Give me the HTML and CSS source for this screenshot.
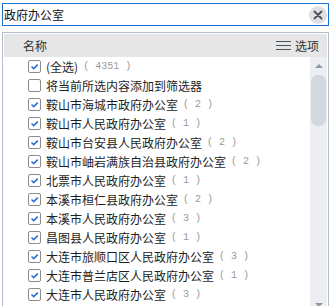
FILE: index.html
```html
<!DOCTYPE html>
<html lang="zh-CN">
<head>
    <meta charset="UTF-8">
    <title>筛选器</title>
    <link rel="stylesheet" href="styles.css">
</head>
<body>
    <div class="search">
        <span class="search-text">政府办公室</span>
        <span class="clear">
            <svg width="10" height="10" viewBox="0 0 10 10"><path d="M1.5 1.5 L8.5 8.5 M8.5 1.5 L1.5 8.5" stroke="#4b4f57" stroke-width="1.8" stroke-linecap="round"/></svg>
        </span>
    </div>

    <div class="panel">
        <div class="panel-head">
            <span>名称</span>
            <span class="options">
                <svg width="16" height="10" viewBox="0 0 16 10"><path d="M0 0.5 H15 M0 4.5 H15 M0 8.5 H15" stroke="#4a5160" stroke-width="1"/></svg>
                选项
            </span>
        </div>
        <div class="panel-body">
            <ul class="list">
                <li><span class="box checked"></span>(全选)<span class="count">( 4351 )</span></li>
                <li><span class="box"></span>将当前所选内容添加到筛选器</li>
                <li><span class="box checked"></span>鞍山市海城市政府办公室<span class="count">( 2 )</span></li>
                <li><span class="box checked"></span>鞍山市人民政府办公室<span class="count">( 1 )</span></li>
                <li><span class="box checked"></span>鞍山市台安县人民政府办公室<span class="count">( 2 )</span></li>
                <li><span class="box checked"></span>鞍山市岫岩满族自治县政府办公室<span class="count">( 2 )</span></li>
                <li><span class="box checked"></span>北票市人民政府办公室<span class="count">( 1 )</span></li>
                <li><span class="box checked"></span>本溪市桓仁县政府办公室<span class="count">( 2 )</span></li>
                <li><span class="box checked"></span>本溪市人民政府办公室<span class="count">( 3 )</span></li>
                <li><span class="box checked"></span>昌图县人民政府办公室<span class="count">( 1 )</span></li>
                <li><span class="box checked"></span>大连市旅顺口区人民政府办公室<span class="count">( 3 )</span></li>
                <li><span class="box checked"></span>大连市普兰店区人民政府办公室<span class="count">( 1 )</span></li>
                <li><span class="box checked"></span>大连市人民政府办公室<span class="count">( 3 )</span></li>
            </ul>
            <div class="scrollbar">
                <span class="arrow up"></span>
                <span class="thumb"></span>
                <span class="arrow down"></span>
            </div>
        </div>
    </div>
</body>
</html>
```

FILE: styles.css
```css
body {
    margin: 0;
    background: #ffffff;
    font-family: "Noto Sans CJK SC", "Noto Sans", sans-serif;
    font-size: 12px;
    color: #1e1e1e;
    overflow: hidden;
    height: 306px;
}
.search {
    margin: 3px 4px 0 2px;
    height: 21px;
    border: 1px solid #1a72d0;
    display: flex;
    align-items: center;
    justify-content: space-between;
    padding: 0 1px 0 1px;
}
.search-text {
    font-size: 12px;
    color: #111;
}
.clear {
    width: 18px;
    height: 18px;
    border-radius: 50%;
    background: #dfe0e4;
    display: flex;
    align-items: center;
    justify-content: center;
}
.panel {
    margin: 6px 4px 0 2px;
    border: 1px solid #b3bdca;
    border-bottom: none;
    padding: 1px 1px 0 1px;
    height: 274px;
    overflow: hidden;
}
.panel-head {
    height: 23px;
    background: #e6e6e6;
    display: flex;
    align-items: center;
    justify-content: space-between;
    padding: 0 8px 0 19px;
    color: #333;
}
.options {
    display: flex;
    align-items: center;
    gap: 3px;
}
.panel-body {
    display: flex;
    height: 251px;
    overflow: hidden;
}
.list {
    list-style: none;
    margin: 0;
    padding: 0;
    flex: 1;
}
.list li {
    height: 19px;
    display: flex;
    align-items: center;
    padding-left: 24px;
    white-space: nowrap;
}
.box {
    width: 11px;
    height: 11px;
    border: 1px solid #8c8c8c;
    border-radius: 2px;
    margin-right: 5px;
    background: #fff no-repeat center;
    flex: none;
}
.box.checked {
    background-image: url("data:image/svg+xml;utf8,<svg xmlns='http://www.w3.org/2000/svg' width='11' height='11' viewBox='0 0 11 11'><path d='M2.5 5.5 L4.7 7.6 L8.8 3.6' fill='none' stroke='%232f6fd2' stroke-width='1.6'/></svg>");
}
.count {
    font-family: "Liberation Mono", monospace;
    font-size: 10px;
    color: #9a9a9a;
    margin-left: 5px;
}
.scrollbar {
    width: 17px;
    background: #eceef2;
    display: flex;
    flex-direction: column;
    align-items: center;
    padding-top: 7px;
}
.thumb {
    width: 15px;
    height: 51px;
    margin-top: 7px;
    background: #d3d8e0;
    border-radius: 7px;
}
.arrow {
    width: 0;
    height: 0;
    border-left: 4px solid transparent;
    border-right: 4px solid transparent;
}
.arrow.up {
    border-bottom: 4px solid #8d98aa;
}
.arrow.down {
    margin-top: auto;
    margin-bottom: 1px;
    border-top: 4px solid #8d98aa;
}
```
